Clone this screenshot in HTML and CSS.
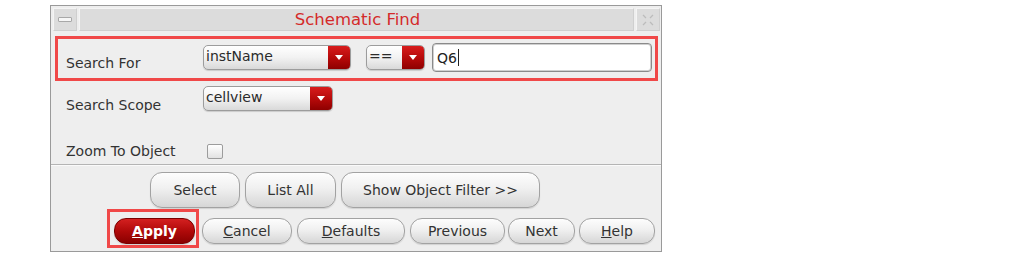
FILE: index.html
```html
<!DOCTYPE html>
<html lang="en">
<head>
    <meta charset="UTF-8">
    <title>Schematic Find</title>
    <link rel="stylesheet" href="styles.css">
</head>
<body>
    <div class="dialog">
        <div class="titlebar">
            <div class="tb-btn"><span class="min-mark"></span></div>
            <div class="tb-title">Schematic Find</div>
            <div class="tb-btn">
                <svg width="14" height="14" viewBox="0 0 14 14">
                    <path d="M2 2 L5 5 M12 2 L9 5 M2 12 L5 9 M12 12 L9 9" stroke="#bcbcbc" stroke-width="1.3" fill="none"/>
                </svg>
            </div>
        </div>

        <div class="find-box">
            <span class="label">Search For</span>
            <div class="combo combo-name"><span class="combo-text">instName</span><span class="combo-arrow"></span></div>
            <div class="combo combo-op"><span class="combo-text">==</span><span class="combo-arrow"></span></div>
            <div class="text-field">Q6<span class="caret"></span></div>
        </div>

        <div class="row row-scope">
            <span class="label">Search Scope</span>
            <div class="combo combo-scope"><span class="combo-text">cellview</span><span class="combo-arrow"></span></div>
        </div>

        <div class="row row-zoom">
            <span class="label">Zoom To Object</span>
            <span class="checkbox"></span>
        </div>

        <div class="separator"></div>

        <div class="btn-row btn-row-top">
            <button class="btn btn-select">Select</button>
            <button class="btn btn-list">List All</button>
            <button class="btn btn-filter">Show Object Filter &gt;&gt;</button>
        </div>

        <div class="btn-row btn-row-bottom">
            <div class="apply-mark">
                <button class="btn btn-apply"><u>A</u>pply</button>
            </div>
            <button class="btn btn-cancel"><u>C</u>ancel</button>
            <button class="btn btn-defaults"><u>D</u>efaults</button>
            <button class="btn btn-previous">Previous</button>
            <button class="btn btn-next">Next</button>
            <button class="btn btn-help"><u>H</u>elp</button>
        </div>
    </div>
</body>
</html>
```

FILE: styles.css
```css
body {
    margin: 0;
    background-color: white;
    font-family: "DejaVu Sans", sans-serif;
    font-size: 14px;
    color: #333;
}
.dialog {
    box-sizing: border-box;
    margin: 5px 0 0 50px;
    width: 612px;
    height: 247px;
    border: 1px solid #9a9a9a;
    background-color: #eeeeee;
}
.titlebar {
    display: flex;
    gap: 2px;
    height: 23px;
    margin: 2px 1px 0 2px;
}
.tb-btn, .tb-title {
    box-sizing: border-box;
    background-color: #dcdcdc;
    border: 1px solid #cfcfcf;
    border-top-color: #f4f4f4;
    border-left-color: #f4f4f4;
}
.tb-btn {
    width: 24px;
    display: flex;
    align-items: center;
    justify-content: center;
}
.min-mark {
    width: 12px;
    height: 3px;
    background-color: #f6f6f6;
    border: 1px solid #a8a8a8;
    border-radius: 1px;
}
.tb-title {
    flex: 1;
    text-align: center;
    color: #d42a2a;
    font-size: 16.5px;
    line-height: 21px;
    padding-left: 2px;
}
.find-box {
    box-sizing: border-box;
    display: flex;
    align-items: flex-start;
    margin: 5px 0 0 4px;
    width: 603px;
    height: 45px;
    border: 3px solid #f04848;
}
.label {
    display: block;
    line-height: 16px;
    white-space: nowrap;
}
.find-box .label {
    width: 137px;
    padding-left: 8px;
    margin-top: 16px;
}
.combo {
    box-sizing: border-box;
    display: flex;
    height: 25px;
    border: 1px solid #9c9c9c;
    border-radius: 5px;
    background: linear-gradient(#ffffff, #f2f2f2 50%, #d9d9d9);
    box-shadow: 0 1px 1px rgba(0, 0, 0, 0.15);
    overflow: hidden;
}
.combo-text {
    flex: 1;
    padding-left: 2px;
    line-height: 20px;
    color: #2a2a2a;
}
.combo-arrow {
    width: 22px;
    position: relative;
    background: linear-gradient(#d81c1c, #b00808 60%, #8e0000);
}
.combo-arrow::after {
    content: "";
    position: absolute;
    left: 7px;
    top: 9px;
    border-left: 4px solid transparent;
    border-right: 4px solid transparent;
    border-top: 5px solid white;
}
.find-box .combo {
    margin-top: 6px;
}
.combo-name {
    width: 148px;
}
.combo-op {
    width: 59px;
    margin-left: 15px;
}
.text-field {
    box-sizing: border-box;
    width: 220px;
    height: 29px;
    margin: 4px 0 0 7px;
    padding-left: 4px;
    border: 1px solid #8a8a8a;
    border-radius: 4px;
    background-color: white;
    box-shadow: inset 0 0 0 1px #d0d0d0;
    line-height: 26px;
    color: #222;
    display: flex;
    align-items: center;
}
.caret {
    display: inline-block;
    width: 1px;
    height: 17px;
    background-color: #222;
    margin-left: 1px;
}
.row {
    display: flex;
    align-items: flex-start;
    padding-left: 15px;
}
.row .label {
    width: 137px;
}
.row-scope {
    margin-top: 5px;
    height: 25px;
}
.row-scope .label {
    margin-top: 11px;
}
.combo-scope {
    width: 130px;
}
.row-zoom {
    margin-top: 32px;
    height: 17px;
}
.row-zoom .label {
    width: 141px;
}
.checkbox {
    box-sizing: border-box;
    width: 16px;
    height: 15px;
    margin-top: 1px;
    border: 1px solid #9c9c9c;
    border-radius: 2px;
    background: linear-gradient(#ffffff, #e2e2e2);
}
.separator {
    margin-top: 4px;
    height: 1px;
    background-color: #b4b4b4;
    border-bottom: 1px solid #fafafa;
}
.btn-row {
    display: flex;
    align-items: flex-start;
}
.btn {
    box-sizing: border-box;
    font-family: "DejaVu Sans", sans-serif;
    font-size: 14px;
    color: #333;
    border: 1px solid #a2a2a2;
    border-radius: 12px;
    background: linear-gradient(#fdfdfd, #f0f0f0 45%, #d6d6d6);
    box-shadow: 0 1px 1px rgba(0, 0, 0, 0.12);
    padding: 0;
    cursor: pointer;
}
.btn-row-top {
    margin-top: 6px;
    padding-left: 99px;
    gap: 5px;
}
.btn-row-top .btn {
    height: 36px;
}
.btn-select { width: 90px; }
.btn-list { width: 91px; }
.btn-filter { width: 199px; }
.btn-row-bottom {
    margin-top: 1px;
    padding-left: 56px;
}
.apply-mark {
    box-sizing: border-box;
    width: 92px;
    height: 39px;
    border: 3px solid #f04848;
    padding: 6px 0 0 4px;
}
.btn-row-bottom .btn {
    height: 26px;
}
.btn-row-bottom > .btn {
    margin-top: 9px;
}
.btn-apply {
    width: 81px;
    color: white;
    font-weight: bold;
    border-color: #7a0000;
    background: linear-gradient(#d42020, #b00a0a 50%, #8a0000);
}
.btn-cancel { width: 90px; margin-left: 3px; }
.btn-defaults { width: 108px; margin-left: 5px; }
.btn-previous { width: 95px; margin-left: 5px; }
.btn-next { width: 67px; margin-left: 3px; }
.btn-help { width: 76px; margin-left: 4px; }
```
